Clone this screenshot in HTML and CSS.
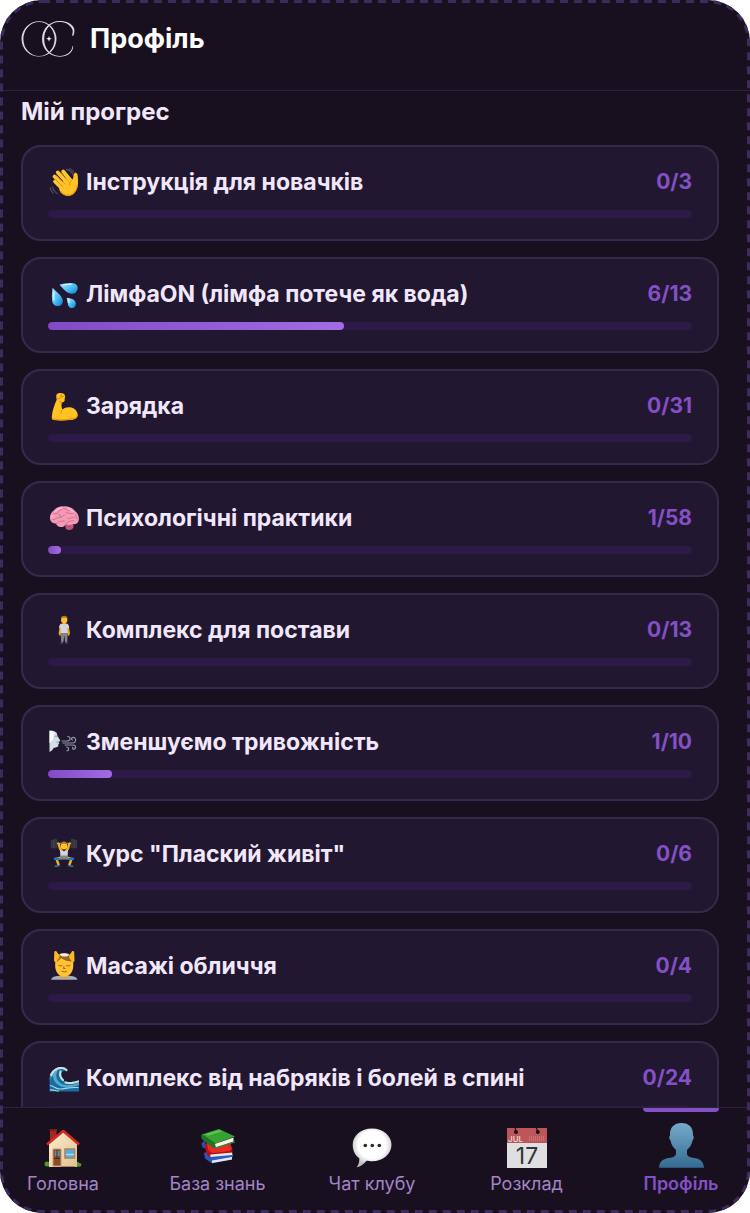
FILE: index.html
```html
<!DOCTYPE html>
<html lang="uk">
<head>
<meta charset="utf-8">
<meta name="viewport" content="width=device-width, initial-scale=1">
<title>Профіль</title>
<link rel="stylesheet" href="styles.css">
</head>
<body>
<div class="app">
  <header class="header">
    <svg class="logo" viewBox="0 0 54 36" aria-hidden="true">
      <path fill="#d9d6de" fill-rule="evenodd" d="M18 .2a17.500 17.700 0 1 1 0 35.400a17.500 17.700 0 1 1 0-35.400zM18 .9a15.600 17 0 1 0 0 34a15.600 17 0 1 0 0-34z"/>
      <path fill="#d9d6de" d="M52.600 14.500l-1.600.2c.8-2.800 1-5 .2-6.500C49 3.600 44.500 1 38.500 1 29.500 1 23.200 8.400 23.200 18s6.300 16.900 15.300 16.900c7 0 12.300-3.500 13-9.800l.7.1C52 32 46 35.700 38.500 35.700 28.500 35.700 21 28 21 18S28.500.1 38.500.1C45.500.1 50.600 2.400 52.900 7c.8 1.900.6 4.700-.3 7.500z"/>
      <path fill="#fff" d="M28 14.800l.7 2.300 2.300.7-2.300.7-.7 2.300-.7-2.300-2.300-.7 2.300-.7z"/>
    </svg>
    <h1 class="header-title">Профіль</h1>
  </header>

  <main class="content">
    <h2 class="section-title">Мій прогрес</h2>
    <ul class="cards">
      <li class="card">
        <div class="card-row">
          <svg class="emoji" viewBox="0 0 32 32" aria-hidden="true">
            <g fill="none" stroke="#51485c" stroke-width="1.300" stroke-linecap="round"><path d="M18.500 3.500q5 1 7 6M21.500 2.500q3 1.200 4.500 4M4.500 21q1.500 5 5 6.500M2.200 22q.8 3.500 2.800 5"/></g>
            <g fill="none" stroke="#ffc62e" stroke-linecap="round" stroke-width="3.800"><path d="M7 15.500l8 8M6.500 10.500l10 10M9.800 6.500l9.700 10.500M15.200 5.500l7.300 9"/></g>
            <path fill="#ffc227" d="M11 19L20 10l4.500 3.500c1.500-2 .5-5 2-6.300 1.700-1.200 3.300.6 3.300 3.300 0 3 .8 6-.3 10.500C28.400 26 24.500 30 20.500 30c-3.500 0-6-2-9-5.500z"/>
            <path fill="none" stroke="#dc8410" stroke-width=".8" stroke-linecap="round" d="M7.500 13.500l7 7M8.500 9.500l8.500 8.500M13 7.200l7.500 8M24.500 13.500c-2 1.200-3 3-2.700 5.200"/>
            <path fill="none" stroke="#f09a18" stroke-width="1.200" d="M12.500 25.500c3 3.200 6 4.200 9.500 3.500 4-1.500 6.500-5 7.200-9"/>
          </svg>
          <h3 class="card-title">Інструкція для новачків</h3>
          <span class="card-count">0/3</span>
        </div>
        <div class="bar" role="progressbar" aria-label="Інструкція для новачків" aria-valuemin="0" aria-valuenow="0" aria-valuemax="3"></div>
      </li>
      <li class="card">
        <div class="card-row">
          <svg class="emoji" viewBox="0 0 32 32" aria-hidden="true">
            <defs><linearGradient id="drop" x1="0" y1="0" x2="1" y2="1"><stop offset="0" stop-color="#aeeaff"/><stop offset=".5" stop-color="#51c2f6"/><stop offset="1" stop-color="#087fd0"/></linearGradient></defs>
            <path fill="url(#drop)" d="M11.500 6.800C16 5.400 21 4.600 25 5.200c3.500.5 5.200 2.800 4.600 5.800-.6 3.300-3.200 5.200-6.300 4.800-4.800-.6-8-5-11.800-9z"/>
            <path fill="url(#drop)" d="M4.600 9.800c3 3.500 8.500 7.200 9.900 11.400 1 3.300-.7 6.300-4 6.800-3.400.5-6-1.600-6.400-5.200-.5-4.300 0-8.500.5-13z"/>
            <path fill="url(#drop)" d="M18.700 19.800c3 .3 7 1.200 8.500 3.700 1.400 2.600.4 5.600-2 6.400-2.300.7-4.500-.5-5.100-2.900-.7-2.500-1-4.700-1.400-7.200z"/>
            <path fill="none" stroke="#e0f8ff" stroke-width="1.200" stroke-linecap="round" d="M15.500 7q4-1 7.500-.7M6 14q-.6 4 .1 8M20.500 22l.8 2.500"/>
          </svg>
          <h3 class="card-title">ЛімфаON (лімфа потече як вода)</h3>
          <span class="card-count">6/13</span>
        </div>
        <div class="bar" role="progressbar" aria-label="ЛімфаON" aria-valuemin="0" aria-valuenow="6" aria-valuemax="13"><div class="bar-fill" style="width: 46%"></div></div>
      </li>
      <li class="card">
        <div class="card-row">
          <svg class="emoji" viewBox="0 0 32 32" aria-hidden="true">
            <path fill="#ffc422" d="M8.300 5.500c.2-1.600 1.500-2.500 3.500-2.600 3-.2 5.200.8 5.300 3 .1 1.600-.7 2.800-.4 4.600-.2 1.300-1.300 1.700-2.600 1.800-.8 2.500-1 4.500.4 7.200 2-1.800 4.500-2.600 7.200-2.300 4.500.5 8 3.800 8 7.600 0 3.800-3.500 5-8.200 5.300-5.500.4-11.500.5-15 0-2-.3-2.800-1-2.700-3 .3-6 2.600-12 4.900-17.300-.4-1.400-.6-2.900-.4-4.300z"/>
            <path fill="none" stroke="#d98108" stroke-width=".9" stroke-linecap="round" d="M9.200 8.600c2 .5 3.300-.2 3.600-1.800l3.200-.5M13 6.500l.3-2M14 12.300l-2.300-.6M14.500 19.500c-1.300 1.300-1.700 2.300-1.500 3.500"/>
            <path fill="none" stroke="#ee9a0b" stroke-width="1.300" d="M4.500 29c7 1.500 15 .8 20-.3 3-.6 4.700-1.900 4.900-4"/>
          </svg>
          <h3 class="card-title">Зарядка</h3>
          <span class="card-count">0/31</span>
        </div>
        <div class="bar" role="progressbar" aria-label="Зарядка" aria-valuemin="0" aria-valuenow="0" aria-valuemax="31"></div>
      </li>
      <li class="card">
        <div class="card-row">
          <svg class="emoji" viewBox="0 0 32 32" aria-hidden="true">
            <path fill="#c25578" d="M17 21.500c3-1.500 7-.8 8.300 1.500 1 2.500-.8 4.700-3.800 5-2.700.2-3.700-1-4-2.800z"/>
            <path fill="#f39bb5" d="M2 17c-.4-3.500 1-6.500 3.500-8.200C8 5.500 12 4 15.500 4.400 20 4 24.500 5.800 27 9c2.800 2 4.300 5.500 3.800 9-.4 3-2.800 4.600-5.800 4.200-2.500 1-5.500.8-7.500 0-.8 2.400-3.700 3.500-6.300 2.600-1.700-.6-2.700-1.600-3-3C5 21.500 2.500 20 2 17z"/>
            <g fill="none" stroke="#c85b80" stroke-width=".7" stroke-linecap="round"><path d="M5 12c2.500-1 3.500.5 5-1.500s2-3.300 4.500-3M4.500 17.500c3 .5 4-2 6.500-2s3.500-2 5.500-2.500M8.500 21.500c2-2.500 5-2.500 8-2.500M16 6c2 .8 3 2.500 5.500 2.500M18 11c2.500-1 4 1.500 7 .5M17.500 22c2-2 4.500-3.500 8-3.500M20 16.500c2 .5 3.500-1.500 6-1M27.500 12.500c.5 1.500.5 3 1.500 4.500M11 12l1.500 3"/></g>
            <path fill="none" stroke="#ffd0dc" stroke-width=".9" stroke-linecap="round" d="M7 9.500q3-3.500 6.500-3.600M20 6.600q3 .8 4.700 2.800M4 15q.3-1.500 1-2"/>
          </svg>
          <h3 class="card-title">Психологічні практики</h3>
          <span class="card-count">1/58</span>
        </div>
        <div class="bar" role="progressbar" aria-label="Психологічні практики" aria-valuemin="0" aria-valuenow="1" aria-valuemax="58"><div class="bar-fill" style="width: 2%"></div></div>
      </li>
      <li class="card">
        <div class="card-row">
          <svg class="emoji" viewBox="0 0 32 32" aria-hidden="true">
            <path fill="#efa51c" d="M11.800 12l-1.200 7.500 1 2.300 1.200-.3.600-8zM20.800 12l1.200 7.500-1 2.300-1.200-.3-.6-8z"/>
            <path fill="#828188" d="M12.500 18.500h7.300l-.6 9.500h-2.100l-.7-6.500-1 6.500h-2.200z"/>
            <path fill="#d4d5dd" d="M11.100 14c0-3 1-4.200 3-4.400h4c2 .2 3 1.400 3 4.400l-1.600.5.500 4.500h-7.500l.3-4.500z"/>
            <path fill="#4a4852" d="M12.800 28h2.400v1.800h-3zM17.200 28h2.200l.8 1.800h-3z"/>
            <circle cx="16.200" cy="5.900" r="3.200" fill="#ffc02d"/><path fill="#ffc02d" d="M15 8h2.400v2.200H15z"/>
            <path fill="#b5741b" d="M13 5.300c-.2-2.700 1.300-3.500 3.200-3.500s3.500.8 3.300 3.500c-.6-1-1-1.600-1.500-1.800-1.400.4-3 .4-4 .2-.5.400-.8.900-1 1.600z"/>
          </svg>
          <h3 class="card-title">Комплекс для постави</h3>
          <span class="card-count">0/13</span>
        </div>
        <div class="bar" role="progressbar" aria-label="Комплекс для постави" aria-valuemin="0" aria-valuenow="0" aria-valuemax="13"></div>
      </li>
      <li class="card">
        <div class="card-row">
          <svg class="emoji" viewBox="0 0 32 32" aria-hidden="true">
            <path fill="#d2dee5" d="M1.500 4.500c2.500-.3 5 .5 7 2l1 3.500 2.200 3.500c.8 1 .5 1.800-.8 2.200l.3 1.500-1 1.200.2 1.800c-2 1.700-4 .8-5 2-.7 1.600-2.200 3-3.900 3.800z"/>
            <path fill="#f8fbfd" d="M1.500 5c2.500-.2 4 .5 5.500 2-2.500 2.500-1 6-3 8l-2.500 2z"/>
            <path fill="none" stroke="#7c8d9b" stroke-width=".9" d="M6.700 10.500q1.300-1 2.800.2M11 16l-2.500.2"/>
            <g fill="none" stroke="#8f95a2" stroke-width="1.200" stroke-linecap="round"><path d="M14 15h4.500M15 17h9.500c4 0 4-5.500.8-5.700-2-.1-2.500 2.200-.8 2.700M19 15c4.500 0 3.500-4.800.8-4.500M17 19h8c3.500 0 3 4.500.8 4.300-1.400-.1-1.500-1.500-.8-2M18.500 21c3 0 2.500 4 .5 3.700"/></g>
          </svg>
          <h3 class="card-title">Зменшуємо тривожність</h3>
          <span class="card-count">1/10</span>
        </div>
        <div class="bar" role="progressbar" aria-label="Зменшуємо тривожність" aria-valuemin="0" aria-valuenow="1" aria-valuemax="10"><div class="bar-fill" style="width: 10%"></div></div>
      </li>
      <li class="card">
        <div class="card-row">
          <svg class="emoji" viewBox="0 0 32 32" aria-hidden="true">
            <path stroke="#85868e" stroke-width="1" d="M5 5.500h22"/>
            <g fill="#33343a" stroke="#4c4e57" stroke-width=".5"><rect x="3.200" y="2" width="2.400" height="8" rx="1"/><rect x="6" y="1.300" width="2.800" height="8.800" rx="1"/><rect x="23.200" y="1.300" width="2.800" height="8.800" rx="1"/><rect x="26.400" y="2" width="2.400" height="8" rx="1"/></g>
            <path fill="none" stroke="#f4b022" stroke-width="2.400" stroke-linejoin="round" stroke-linecap="round" d="M10.500 5.500l1.500 5 2.500 3.500M21.500 5.500l-1.500 5-2.500 3.500M12 20l-3.500 1 2 5.500M20 20l3.500 1-2 5.500"/>
            <path fill="#d4d6de" d="M12 12c2.500 1.500 5.500 1.500 8 0l-.5 7.500h-7z"/>
            <path fill="#85858d" d="M12.200 17.500h7.600l1.200 4h-10z"/>
            <path fill="none" stroke="#1f79bd" stroke-width="2.600" stroke-linecap="round" d="M10.500 21l-3.500-.3M21.500 21l3.500-.3"/>
            <path fill="none" stroke="#397a9e" stroke-width="1.600" stroke-linecap="round" d="M7.500 28.300l3.500-.5M21 27.800l3.500.5"/>
            <circle cx="16" cy="8" r="3.400" fill="#ffc331"/><path fill="#b67b22" d="M12.700 6.700c0-2.300 1.400-3.200 3.300-3.200s3.300.9 3.300 3.200c-1-1.400-5.600-1.400-6.600 0z"/>
          </svg>
          <h3 class="card-title">Курс "Плаский живіт"</h3>
          <span class="card-count">0/6</span>
        </div>
        <div class="bar" role="progressbar" aria-label="Курс Плаский живіт" aria-valuemin="0" aria-valuenow="0" aria-valuemax="6"></div>
      </li>
      <li class="card">
        <div class="card-row">
          <svg class="emoji" viewBox="0 0 32 32" aria-hidden="true">
            <path fill="#a9adb6" d="M3 29.800c.5-2.500 3.500-3.500 8-4h10.500c4.500.5 7.500 1.500 8 4z"/>
            <path fill="#e99a19" d="M12.500 21h7.500v5.500c-2 2-5.500 2-7.500 0z"/>
            <path fill="#9b641f" d="M7 13C6 6.500 10 3 16.200 3S26.500 6.500 25.500 13z"/>
            <path fill="#ffc331" d="M7.500 12c2-.5 4.500-2.200 5.500-4 3 2.500 7.500 3.500 12 3.500.6 3.500.4 6.500-.6 9-1.600 4-4.700 6.300-8.200 6.300s-6.600-2.300-8.200-6.300c-1-3-1.100-5.500-.5-8.500z"/>
            <path fill="#fbb91f" d="M6.300 1.500c1.500-1.200 2.500-.4 2.900 1l2.300 3c.8 1.500-1.500 4-3.500 7L6 11zM26.200 1.500c-1.500-1.200-2.500-.4-2.900 1l-2.300 3c-.8 1.500 1.500 4 3.500 7l2-1.500z"/>
            <path fill="#f4eee8" d="M11.500 4.200c3-1.400 6.500-1.400 9.500 0-1 2-2 2.300-4.500 2.300s-4-.5-5-2.300z"/>
            <path fill="none" stroke="#9b5a12" stroke-width=".9" stroke-linecap="round" d="M10.700 15.500q1.700 1.300 3.500 0M18.500 15.500q1.700 1.300 3.500 0M14 21.500q2.300 1 4.500 0M16 16.500l-.5 2h1.500"/>
          </svg>
          <h3 class="card-title">Масажі обличчя</h3>
          <span class="card-count">0/4</span>
        </div>
        <div class="bar" role="progressbar" aria-label="Масажі обличчя" aria-valuemin="0" aria-valuenow="0" aria-valuemax="4"></div>
      </li>
      <li class="card">
        <div class="card-row">
          <svg class="emoji" viewBox="0 0 32 32" aria-hidden="true">
            <path fill="#176da3" d="M1.500 29.500V15.500C2.500 10 7 5.500 13 5.300c3-.1 5.800 1.300 6.500 3.700-3.500-1-6 .5-6.200 4-.2 4.500 4 7.500 9 7.300 3.500-.2 6-.8 8.700-1.800v11z"/>
            <path fill="#55a9c9" d="M1.500 18c1-5 4.500-9.500 9-11-3 4.500-3 9.500.5 13 4.500 4.500 13 4 20 .5v2.500c-8 3.500-17 3.500-22-1-2.500-2.300-4-5-4-8-1.500 1-2.800 2.500-3.500 4z"/>
            <path fill="none" stroke="#c9dfdc" stroke-width="2.200" stroke-linecap="round" stroke-dasharray="2 1" d="M3 13C5.500 8 9.500 5.800 13.500 6c2.500.1 4 .8 5 2.200M12.500 9.500c-1.200 3.500.2 6.500 2.500 8.500M17.500 20.500c4 1.200 9 .3 12.500-1"/>
            <path fill="none" stroke="#a7dbe3" stroke-width="1.100" d="M2 23.500c4 .5 5.500 3.500 10 3.500 5 0 8-2 18.500-1.500M2 28c4-.5 6 1 9 1"/>
          </svg>
          <h3 class="card-title">Комплекс від набряків і болей в спині</h3>
          <span class="card-count">0/24</span>
        </div>
        <div class="bar" role="progressbar" aria-label="Комплекс від набряків і болей в спині" aria-valuemin="0" aria-valuenow="0" aria-valuemax="24"></div>
      </li>
    </ul>
  </main>

  <nav class="nav" aria-label="Меню">
    <a class="nav-item" href="#home">
      <svg class="nav-icon" viewBox="0 0 48 48" aria-hidden="true">
        <defs><linearGradient id="wall" x1="0" x2="1" y1="0" y2="1"><stop offset="0" stop-color="#fff0d0"/><stop offset="1" stop-color="#dfbf91"/></linearGradient></defs>
        <path fill="#a92723" d="M11 8h6.500v8L11 21z"/><path fill="#74201e" d="M10.500 7h7.500v2h-7.500z"/>
        <g fill="#4e982c"><circle cx="8" cy="42" r="2.500"/><circle cx="11" cy="42.500" r="2.300"/><circle cx="38" cy="42.300" r="2.500"/><circle cx="40.500" cy="42.800" r="1.900"/></g>
        <path fill="url(#wall)" d="M10 20L24.500 8.500 38 20.500V45H10z"/>
        <path fill="none" stroke="#d62923" stroke-width="2.600" stroke-linejoin="round" d="M8 22.500L24.300 9 40 22.500"/>
        <path fill="#8b4b2b" stroke="#c39a70" d="M14 27h8v17h-8z"/><path fill="#5597bc" d="M16 29h4.500v5H16z"/><path stroke="#4d2919" d="M15 36.500h6M18 28v8"/>
        <path fill="#50afe0" stroke="#a9845e" stroke-width="1.600" d="M26 27h9.500v9H26z"/><path stroke="#a6dcf4" stroke-width="1.300" d="M27 32.500h8"/>
        <path stroke="#a8835e" d="M22 44.500h14"/>
      </svg>
      <span class="nav-label">Головна</span>
    </a>
    <a class="nav-item" href="#knowledge">
      <svg class="nav-icon" viewBox="0 0 48 48" aria-hidden="true">
        <path fill="#2d52b8" d="M10 31l9-4 19 7v3.500l-20 4-7-5z"/><path fill="#e5e9ed" d="M18 38l20-3.500v3L18 41z"/><path fill="#315ac9" d="M18 36.500l21-3.500v1.700L18 38.500z"/>
        <path fill="#2b4fa3" d="M7.500 21l3-2 3 8-4-1c-1.500-1.300-2-3-2-5z"/>
        <path fill="#db2320" d="M13 21l23-1 2.500 8-22 5-4-4z"/><path fill="#e9e9e7" d="M16 31.500l22-1.500.5 3-22 2z"/><path fill="#b31117" d="M12 20c-1.500 6-.5 12 3.500 15.500l1-3 22-2v-1.500l-22 1.500z"/><path fill="#ee2924" d="M13 20l20 1 4 8-19 2-4-3z"/>
        <path fill="#36a332" d="M7.500 12.500L25 7l16 7.500-19.500 7z"/><path fill="#1e7428" d="M7.500 12.500c-.5 2-.3 4 1 5.200L20 26.500l2-1-.5-4z"/><path fill="#f2f3ed" d="M21 22l18.500-6.500v4L22 25.500z"/><path fill="#278e2e" d="M21.500 25.200l19.500-6v1.300l-20 6.300z"/><path fill="#60c653" d="M11 12.300L25 8l3 1.300-14 4.500z"/>
      </svg>
      <span class="nav-label">База знань</span>
    </a>
    <a class="nav-item" href="#chat">
      <svg class="nav-icon" viewBox="0 0 48 48" aria-hidden="true">
        <defs><radialGradient id="bubble" cx=".5" cy=".42" r=".55"><stop offset=".65" stop-color="#fff"/><stop offset="1" stop-color="#bfbfbf"/></radialGradient></defs>
        <path fill="url(#bubble)" d="M24 6.500c11 0 19.500 7.200 19.500 16.300S35 39.300 24 39.300c-1.800 0-4-.2-5.500-.5-2.500 3.200-6 5.800-10 6.500 2-2.300 3-5 2.800-9C7 33.500 4.700 28.500 4.700 22.800 4.700 13.700 13 6.500 24 6.500z"/>
        <g fill="#292929"><circle cx="17.300" cy="23.500" r="1.800"/><circle cx="24.300" cy="23.500" r="1.800"/><circle cx="31.300" cy="23.500" r="1.800"/></g>
      </svg>
      <span class="nav-label">Чат клубу</span>
    </a>
    <a class="nav-item" href="#schedule">
      <svg class="nav-icon" viewBox="0 0 48 48" aria-hidden="true">
        <path fill="#dfdfe1" d="M4 6h40v40H4z"/><path fill="#bd5659" d="M4 6h40v15H4z"/>
        <path stroke="#17101e" stroke-width="1.200" d="M12.500 5v5M33 5l2 5"/><g fill="#17101e"><circle cx="13" cy="10" r="2"/><circle cx="34.800" cy="10" r="2"/></g>
        <path stroke="#ca7173" stroke-width="5" stroke-dasharray="1 1" d="M26 16.500h16"/>
        <text class="cal-month" x="5" y="19.500">JUL</text><text class="cal-day" x="24" y="41.500">17</text>
      </svg>
      <span class="nav-label">Розклад</span>
    </a>
    <a class="nav-item nav-item-active" href="#profile" aria-current="page">
      <svg class="nav-icon" viewBox="0 0 48 48" aria-hidden="true">
        <defs><linearGradient id="person" x1="0" x2="0" y1="0" y2="1"><stop offset="0" stop-color="#75abc9"/><stop offset="1" stop-color="#356b91"/></linearGradient></defs>
        <path fill="url(#person)" d="M24.500 1c7.500 0 12 4.700 11.500 12.500 1.200.5 1 3.500-.5 5-.8 4.500-2.700 7-5.500 9.500v3.500c0 3 3.500 4 7 4.500 6 .8 9.500 3 10 9.700H2c.5-6.700 4-8.900 10-9.700 3.500-.5 7-1.500 7-4.500V28c-2.800-2.500-4.700-5-5.500-9.500-1.500-1.500-1.700-4.500-.5-5C12.500 5.700 17 1 24.500 1z"/>
      </svg>
      <span class="nav-label">Профіль</span>
    </a>
  </nav>
  <svg class="frame" aria-hidden="true"><rect class="frame-line" width="100%" height="100%" rx="42"/></svg>
</div>
</body>
</html>
```
FILE: styles.css
```css
* {
  box-sizing: border-box;
}

body {
  margin: 0;
  background: #fff;
  font-family: Inter, "Noto Sans", "Liberation Sans", sans-serif;
  color: #f1e7fb;
}

h1, h2, h3, ul {
  margin: 0;
  padding: 0;
}

.app {
  position: relative;
  display: flex;
  flex-direction: column;
  height: 100vh;
  overflow: hidden;
  border-radius: 42px;
  background: #18101f;
}

.frame {
  position: absolute;
  inset: 0;
  width: 100%;
  height: 100%;
  pointer-events: none;
}

.frame-line {
  fill: none;
  stroke: #3e2a5c;
  stroke-width: 6;
  stroke-dasharray: 8 6;
}

.header {
  display: flex;
  flex: none;
  align-items: center;
  gap: 15px;
  padding: 19px 21px 31px;
  border-bottom: 1px solid #2d2338;
}

.logo {
  width: 54px;
  height: 36px;
}

.header-title {
  font-size: 27px;
  font-weight: 700;
  line-height: 40px;
  color: #fff;
}

.content {
  flex: 1;
  min-height: 0;
  overflow: auto;
  scrollbar-width: none;
  padding: 5px 31px 16px 21px;
}

.section-title {
  margin-bottom: 17px;
  font-size: 24px;
  font-weight: 700;
  line-height: 32px;
}

.cards {
  display: flex;
  flex-direction: column;
  gap: 16px;
  list-style: none;
}

.card {
  padding: 19px 25px 21px;
  border: 2px solid #3a274e;
  border-radius: 20px;
  background: #221730;
}

.card-row {
  display: flex;
  align-items: center;
  gap: 6px;
  margin-bottom: 12px;
}

.emoji {
  flex: none;
  width: 32px;
  height: 32px;
}

.card-title {
  flex: 1;
  font-size: 23px;
  font-weight: 700;
  line-height: 32px;
}

.card-count {
  font-size: 21px;
  font-weight: 700;
  line-height: 32px;
  color: #8450c6;
}

.bar {
  height: 8px;
  overflow: hidden;
  border-radius: 4px;
  background: #2d1846;
}

.bar-fill {
  height: 100%;
  border-radius: 4px;
  background: linear-gradient(90deg, #824bc5, #a26be2);
}

.nav {
  display: flex;
  flex: none;
  justify-content: space-between;
  padding: 0 31px 0 25px;
  border-top: 1px solid #2d2338;
}

.nav-item {
  position: relative;
  display: flex;
  flex-direction: column;
  align-items: center;
  gap: 2px;
  width: 76px;
  padding: 14px 0 17px;
  color: #a384c8;
  text-decoration: none;
}

.nav-icon {
  width: 48px;
  height: 48px;
}

.nav-label {
  font-size: 18px;
  font-weight: 400;
  line-height: 24px;
  white-space: nowrap;
}

.nav-item-active {
  color: #8450c6;
}

.nav-item-active .nav-label {
  font-weight: 600;
}

.nav-item-active::before {
  content: "";
  position: absolute;
  top: 0;
  left: 0;
  width: 100%;
  height: 4px;
  border-radius: 0 0 4px 4px;
  background: #8450c6;
}

.cal-month {
  font-size: 8px;
  font-weight: 600;
  fill: #efcfd0;
}

.cal-day {
  font-size: 23px;
  font-weight: 400;
  text-anchor: middle;
  fill: #333;
}
```
